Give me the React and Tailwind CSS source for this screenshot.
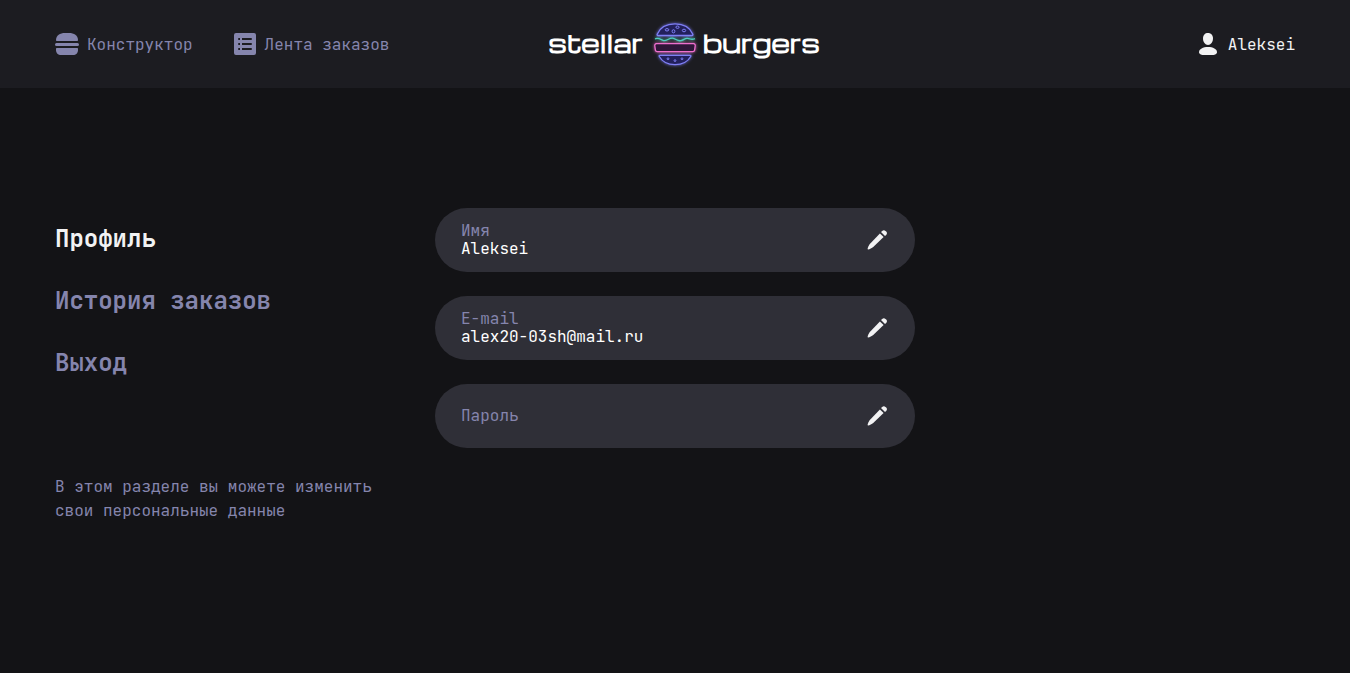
const mono = "font-['JetBrains_Mono','DejaVu_Sans_Mono',monospace]";

function BurgerIcon() {
  return (
    <svg width="24" height="24" viewBox="0 0 24 24" fill="currentColor" aria-hidden="true">
      <path d="M1 8C1 3.500 5 1 10 1h4c5 0 9 2.500 9 7 0 .6-.4 1-1 1H2c-.6 0-1-.4-1-1Z" />
      <rect x="0" y="11" width="24" height="3" rx="1.500" />
      <path d="M1 17c0-.6.4-1 1-1h20c.6 0 1 .4 1 1v1c0 3-2 5-5 5H6c-3 0-5-2-5-5v-1Z" />
    </svg>
  );
}

function ListIcon() {
  return (
    <svg width="24" height="24" viewBox="0 0 24 24" fill="currentColor" aria-hidden="true">
      <path
        fillRule="evenodd"
        d="M3 1h18a2 2 0 0 1 2 2v18a2 2 0 0 1-2 2H3a2 2 0 0 1-2-2V3a2 2 0 0 1 2-2Zm3 5a1 1 0 0 0 0 2h1V6H6Zm3 0v2h9a1 1 0 0 0 0-2H9Zm-3 5a1 1 0 0 0 0 2h1v-2H6Zm3 0v2h9a1 1 0 0 0 0-2H9Zm-3 5a1 1 0 0 0 0 2h1v-2H6Zm3 0v2h9a1 1 0 0 0 0-2H9Z"
      />
    </svg>
  );
}

function ProfileIcon() {
  return (
    <svg width="24" height="24" viewBox="0 0 24 24" fill="currentColor" aria-hidden="true">
      <path d="M12 1c3 0 5 2.200 5 5.500S14.800 13 12 13 7 10 7 6.500 9 1 12 1Z" />
      <path d="M12 15c5 0 9 2 9 5.200 0 2-3 2.800-5 2.800H8c-2 0-5-.8-5-2.800C3 17 7 15 12 15Z" />
    </svg>
  );
}

function EditIcon() {
  return (
    <svg width="24" height="24" viewBox="0 0 24 24" fill="currentColor" aria-hidden="true">
      <path d="M14.900 5.400 18.600 9.100 8.500 18.800C6.800 20.300 4.600 21.300 3.200 21.500c-.5 0-.7-.3-.6-.8.3-1.500 1.200-3.500 2.700-5.200L14.900 5.400Z" />
      <path d="M16 4 17.200 2.900c1-1 2.300-1 3.300 0l.7.700c1 1 1 2.300 0 3.300L20 8.100 16 4Z" />
    </svg>
  );
}

function NeonBurger() {
  const shapes = (
    <>
      <g stroke="#7f7ff5" fill="#22205c">
        <path d="M6.200 14.200C9 7.500 15.500 3.800 24 3.800s15 3.700 17.800 10.400c.3.900 0 1.300-.8 1.300H7c-.8 0-1.100-.4-.8-1.300Z" />
        <path d="M9 35.300h30c.9 0 1.100.5.7 1.200C36.800 41.700 31.200 44.600 24 44.600S11.200 41.700 8.300 36.500c-.4-.7-.2-1.200.7-1.200Z" />
        <g fill="none" strokeWidth="1">
          <ellipse cx="16" cy="9.800" rx="1.800" ry="1.200" />
          <ellipse cx="22.500" cy="11.300" rx="1.400" ry="1.600" />
          <ellipse cx="26.500" cy="7.200" rx="1.600" ry="1.200" />
          <ellipse cx="33" cy="10.500" rx="1.700" ry="1.300" />
          <ellipse cx="17" cy="38.800" rx=".9" ry=".9" />
          <ellipse cx="24" cy="40.600" rx=".9" ry=".9" />
          <ellipse cx="31" cy="38.800" rx=".9" ry=".9" />
        </g>
      </g>
      <path
        d="M4 18.800c3-1.200 5 .2 8 1.600s6-2.600 9.500-2.200 4.500 3.300 8.500 2.400 3.500-2.600 6.500-2.200 4 1.800 7.500.2"
        stroke="#4fcbbd"
        fill="none"
      />
      <path
        d="M5.500 23.700h37c1.300 0 1.900.8 1.700 2.200l-.6 4.200c-.2 1.100-.7 1.600-1.900 1.600H6.300c-1.200 0-1.700-.5-1.900-1.600l-.6-4.200c-.2-1.400.4-2.200 1.700-2.200Z"
        stroke="#ee6fce"
        fill="#2f1638"
      />
    </>
  );
  return (
    <svg width="48" height="48" viewBox="0 0 48 48" strokeWidth="1.300" strokeLinejoin="round" aria-hidden="true">
      <defs>
        <filter id="neon" x="-20%" y="-20%" width="140%" height="140%">
          <feGaussianBlur stdDeviation="1.800" />
        </filter>
      </defs>
      <g filter="url(#neon)">{shapes}</g>
      {shapes}
    </svg>
  );
}

function Field({ id, label, type, value }) {
  return (
    <div className="flex h-16 items-center rounded-full bg-[#2f2f37] px-[26px]">
      <div className="flex min-w-0 flex-1 flex-col">
        <label htmlFor={id} className="text-base leading-[18px] text-[#8585ad]">
          {label}
        </label>
        <input
          id={id}
          type={type}
          defaultValue={value}
          className={`w-full bg-transparent text-base leading-[18px] text-white outline-none ${value ? "h-[18px]" : "h-0"}`}
        />
      </div>
      <button type="button" aria-label={`Изменить: ${label}`} className="ml-4 text-[#f2f2f3]">
        <EditIcon />
      </button>
    </div>
  );
}

export default function App() {
  return (
    <div className={`min-h-screen bg-[#131316] text-base text-[#8585ad] ${mono}`}>
      <header className="bg-[#1c1c21]">
        <div className="mx-auto grid min-h-[88px] max-w-[1240px] grid-cols-[1fr_auto_1fr] items-center">
          <nav className="flex items-center gap-10">
            <a href="#constructor" className="flex items-center gap-2 leading-[25px]">
              <BurgerIcon />
              Конструктор
            </a>
            <a href="#feed" className="flex items-center gap-2 leading-[25px] whitespace-nowrap">
              <ListIcon />
              Лента заказов
            </a>
          </nav>
          <a
            href="#home"
            className="grid grid-cols-[1fr_auto_1fr] items-center gap-1 font-['Michroma','Orbitron','DejaVu_Sans',sans-serif] text-2xl leading-6 font-bold text-white"
          >
            <span className="pr-1 pb-1 text-right">stellar</span>
            <NeonBurger />
            <span className="pb-1">burgers</span>
          </a>
          <a href="#profile" className="flex items-center gap-2 justify-self-end leading-[25px] text-[#f2f2f3]">
            <ProfileIcon />
            Aleksei
          </a>
        </div>
      </header>

      <main className="mx-auto flex max-w-[1240px] items-start gap-[60px] pt-[120px]">
        <aside className="w-80 shrink-0">
          <nav className="flex flex-col items-start text-2xl font-bold">
            <a href="#profile" className="flex h-[62px] items-center text-[#f2f2f3]">
              Профиль
            </a>
            <a href="#orders" className="flex h-[62px] items-center">
              История заказов
            </a>
            <button type="button" className="flex h-[62px] items-center">
              Выход
            </button>
          </nav>
          <p className="mt-[81px] leading-6">В этом разделе вы можете изменить свои персональные данные</p>
        </aside>
        <form className="flex max-w-[480px] flex-1 flex-col gap-6">
          <Field id="name" label="Имя" type="text" value="Aleksei" />
          <Field id="email" label="E-mail" type="email" value="alex20-03sh@mail.ru" />
          <Field id="password" label="Пароль" type="password" />
        </form>
      </main>
    </div>
  );
}
